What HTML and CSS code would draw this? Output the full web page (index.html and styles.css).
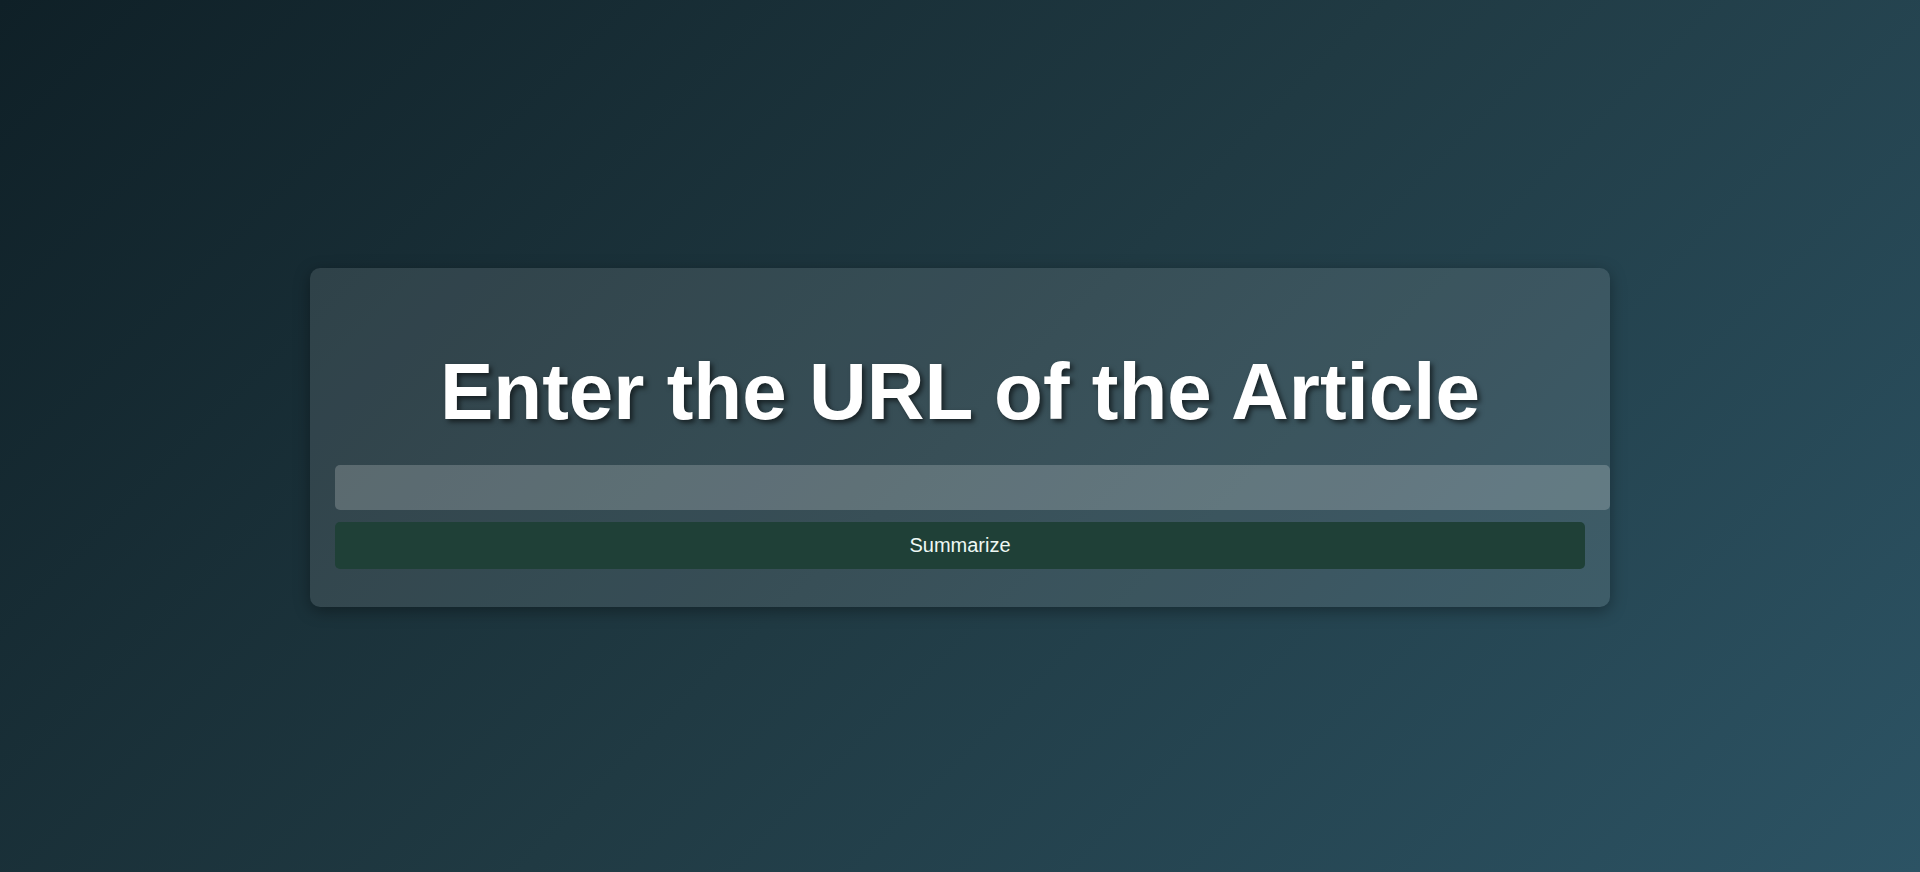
FILE: index.html
```html
<!DOCTYPE html>
<html lang="en">
<head>
<meta charset="utf-8">
<title>Article Summarizer</title>
<link rel="stylesheet" href="styles.css">
</head>
<body>
  <main class="card">
    <h1 class="title">Enter the URL of the Article</h1>
    <input class="url-input" type="text" aria-label="Article URL">
    <button class="submit-btn" type="button">Summarize</button>
  </main>
</body>
</html>
```

FILE: styles.css
```css
html, body {
  height: 100%;
}
body {
  box-sizing: border-box;
  margin: 0;
  padding-top: 3px;
  font-family: "Liberation Sans", Arial, sans-serif;
  background: linear-gradient(135deg, #0f2027 0%, #203a43 50%, #2c5364 100%);
  display: flex;
  align-items: center;
  justify-content: center;
}
.card {
  width: 1250px;
  padding: 25px;
  background: rgba(255, 255, 255, 0.11);
  border-radius: 10px;
  box-shadow: 0 4px 16px rgba(0, 0, 0, 0.35);
  display: flex;
  flex-direction: column;
  align-items: flex-start;
}
.title {
  align-self: stretch;
  margin: 53px 0 27px;
  font-size: 80px;
  font-weight: 700;
  line-height: 92px;
  text-align: center;
  color: #ffffff;
  text-shadow: 3px 3px 5px rgba(0, 0, 0, 0.55);
}
.url-input {
  box-sizing: content-box;
  width: 100%;
  height: 21px;
  padding: 12px 12.5px;
  border: 0;
  border-radius: 5px;
  background: rgba(255, 255, 255, 0.2);
  color: #ffffff;
  font-family: inherit;
  font-size: 16px;
  outline: none;
}
.submit-btn {
  width: 100%;
  height: 47px;
  margin: 12px 0 13px;
  border: 0;
  border-radius: 5px;
  background: #1f4037;
  color: #eef8f4;
  font-family: inherit;
  font-size: 20px;
  cursor: pointer;
}
```
